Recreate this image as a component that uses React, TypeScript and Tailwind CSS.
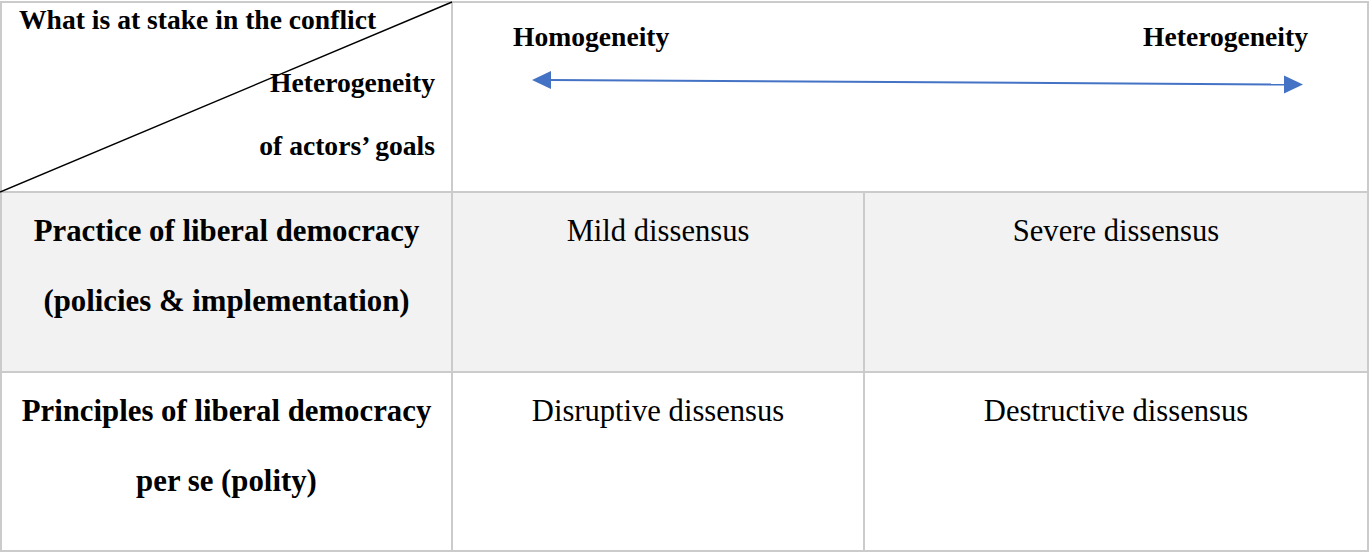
import React from "react";

const serif = "font-['Liberation_Serif','Times_New_Roman',serif]";

type Row = {
  label: string[];
  mild: string;
  severe: string;
  shaded?: boolean;
};

const ROWS: Row[] = [
  {
    label: ["Practice of liberal democracy", "(policies & implementation)"],
    mild: "Mild dissensus",
    severe: "Severe dissensus",
    shaded: true,
  },
  {
    label: ["Principles of liberal democracy", "per se (polity)"],
    mild: "Disruptive dissensus",
    severe: "Destructive dissensus",
  },
];

const DiagonalCell = () => (
  <div className="relative bg-white text-black">
    {/* slash line of the corner cell */}
    <svg
      className="absolute inset-0 overflow-visible pointer-events-none"
      width="449"
      height="188"
    >
      <line x1="-2" y1="189" x2="450" y2="-1" stroke="#000" strokeWidth="1.4" />
    </svg>
    <div className="pl-[17px] pt-[3px] text-[27.6px] font-bold leading-[27px] whitespace-nowrap">
      What is at stake in the conflict
    </div>
    <div className="mt-[18px] pr-[16px] text-right text-[27.6px] font-bold leading-[63px]">
      <div>Heterogeneity</div>
      <div>of actors’ goals</div>
    </div>
  </div>
);

const ScaleCell = () => (
  <div className="col-span-2 bg-white text-black">
    <div className="flex justify-between pl-[60px] pr-[59px] pt-[2px] text-[27.6px] font-bold leading-[63px]">
      <span>Homogeneity</span>
      <span>Heterogeneity</span>
    </div>
    <svg className="block" width="914" height="30">
      <line x1="96" y1="12" x2="833" y2="16.5" stroke="#4472c4" strokeWidth="2" />
      <polygon points="79,12 98,3 98,21" fill="#4472c4" />
      <polygon points="850,16.5 831,7.5 831,25.5" fill="#4472c4" />
    </svg>
  </div>
);

export default function App() {
  return (
    <div className={`bg-white w-[1371px] h-[553px] pt-px ${serif}`}>
      <div className="grid w-[1369px] grid-cols-[449px_410px_502px] grid-rows-[188px_178px_177px] gap-[2px] p-[2px] bg-[#cbcbcb]">
        <DiagonalCell />
        <ScaleCell />
        {ROWS.map((row) => {
          const bg = row.shaded ? "bg-[#f2f2f2]" : "bg-white";
          return (
            <React.Fragment key={row.mild}>
              <div className={`${bg} pt-[3px] text-center text-[30.8px] font-bold leading-[70px] text-black`}>
                {row.label.map((l) => (
                  <div key={l}>{l}</div>
                ))}
              </div>
              <div className={`${bg} pt-[3px] text-center text-[30.6px] leading-[70px] text-black`}>
                {row.mild}
              </div>
              <div className={`${bg} pt-[3px] text-center text-[30.6px] leading-[70px] text-black`}>
                {row.severe}
              </div>
            </React.Fragment>
          );
        })}
      </div>
    </div>
  );
}
